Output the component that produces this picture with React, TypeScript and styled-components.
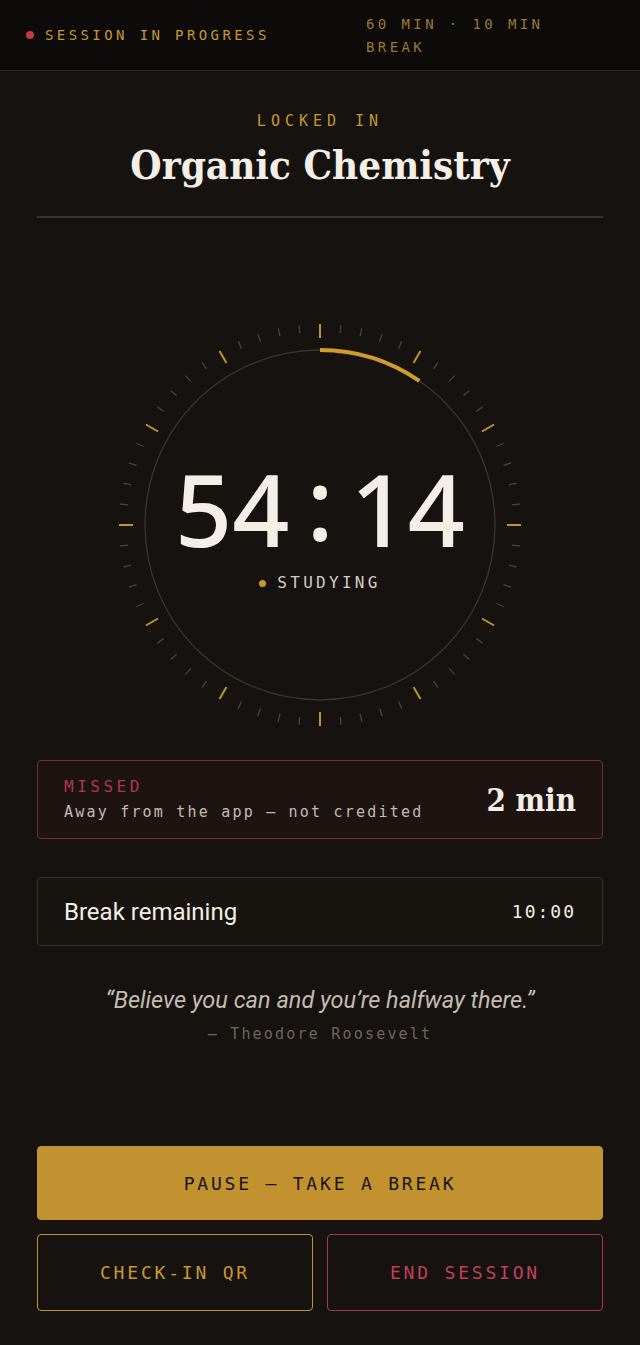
import styled, { createGlobalStyle } from 'styled-components';

const colors = {
  PAGE: '#15120f',
  BAR: '#0d0b09',
  GOLD: '#c8982f',
  GOLD_DIM: '#9a7834',
  RED: '#b3344c',
  RED_BORDER: '#7c2a38',
  INK: '#f3efe6',
  TEXT: '#c4bcb0',
  MUTED: '#6d665c',
  LINE: '#37322c',
};

const MONO = '"DejaVu Sans Mono", "Liberation Mono", monospace';
const SERIF = '"DejaVu Serif Condensed", "DejaVu Serif", serif';

const GlobalStyle = createGlobalStyle`
  * { box-sizing: border-box; }
  body {
    margin: 0;
    background: ${colors.PAGE};
    color: ${colors.INK};
    font-family: Roboto, "Noto Sans", sans-serif;
  }
`;

const Page = styled.div`
  min-height: 100vh;
  display: flex;
  flex-direction: column;
`;

const TopBar = styled.header`
  height: 71px;
  display: flex;
  align-items: center;
  justify-content: space-between;
  padding: 2px 44px 0 26px;
  background: ${colors.BAR};
  border-bottom: 1px solid #2a2622;
`;

const Status = styled.div`
  display: flex;
  align-items: center;
  gap: 11px;
  margin-top: -2px;
  font-family: ${MONO};
  font-size: 14px;
  letter-spacing: 3.4px;
  color: ${colors.GOLD};
`;

const Dot = styled.span<{ $color: string; $size?: number }>`
  width: ${p => p.$size ?? 8}px;
  height: ${p => p.$size ?? 8}px;
  border-radius: 50%;
  background: ${p => p.$color};
  flex-shrink: 0;
`;

const Plan = styled.div`
  width: 230px;
  font-family: ${MONO};
  font-size: 14px;
  line-height: 23px;
  letter-spacing: 3.4px;
  color: ${colors.GOLD_DIM};
`;

const Main = styled.main`
  flex: 1;
  display: flex;
  flex-direction: column;
  padding: 0 37px 34px;
`;

const Heading = styled.section`
  display: flex;
  flex-direction: column;
  align-items: center;
  padding-top: 40px;
  padding-bottom: 26px;
  border-bottom: 2px solid ${colors.LINE};
`;

const Eyebrow = styled.div`
  font-family: ${MONO};
  font-size: 15px;
  letter-spacing: 5px;
  color: ${colors.GOLD};
  line-height: 20px;
`;

const Title = styled.h1`
  margin: 9px 0 0;
  font-family: ${SERIF};
  font-weight: 700;
  font-size: 40px;
  line-height: 50px;
  color: ${colors.INK};
`;

const Dial = styled.div`
  position: relative;
  width: 420px;
  height: 420px;
  margin: 97px auto 0;
`;

const DialCenter = styled.div`
  position: absolute;
  inset: 0;
  display: flex;
  flex-direction: column;
  align-items: center;
  justify-content: center;
`;

const Clock = styled.div`
  display: flex;
  align-items: center;
  font-family: "Noto Sans", "Open Sans", sans-serif;
  font-weight: 500;
  font-size: 100px;
  line-height: 100px;
  color: ${colors.INK};
`;

const Colon = styled.span`
  margin: 0 17px;
  position: relative;
  top: -6px;
`;

const Phase = styled.div`
  margin-top: 16px;
  display: flex;
  align-items: center;
  gap: 11px;
  font-family: ${MONO};
  font-size: 16px;
  line-height: 18px;
  letter-spacing: 3.3px;
  color: #d6cec2;
`;

const Card = styled.div<{ $tone: 'alert' | 'plain' }>`
  display: flex;
  align-items: center;
  justify-content: space-between;
  padding: 0 26px;
  border-radius: 4px;
  border: 1.5px solid ${p => (p.$tone === 'alert' ? colors.RED_BORDER : colors.LINE)};
  background: ${p => (p.$tone === 'alert' ? '#1d1412' : '#17140f')};
  height: ${p => (p.$tone === 'alert' ? 79 : 69)}px;
`;

const MissedCard = styled(Card)`
  margin-top: 25px;
`;

const BreakCard = styled(Card)`
  margin-top: 38px;
`;

const CardText = styled.div`
  display: flex;
  flex-direction: column;
  gap: 5px;
`;

const CardLabel = styled.div`
  font-family: ${MONO};
  font-size: 16px;
  line-height: 20px;
  letter-spacing: 3.5px;
  color: ${colors.RED};
`;

const CardNote = styled.div`
  font-family: ${MONO};
  font-size: 15px;
  line-height: 20px;
  letter-spacing: 2.2px;
  color: ${colors.TEXT};
`;

const BigValue = styled.div`
  font-family: ${SERIF};
  font-weight: 700;
  font-size: 31px;
  color: ${colors.INK};
`;

const BreakLabel = styled.div`
  font-size: 24px;
  color: ${colors.INK};
`;

const BreakTime = styled.div`
  font-family: ${MONO};
  font-size: 18px;
  letter-spacing: 2px;
  color: ${colors.INK};
`;

const Quote = styled.figure`
  margin: 40px 0 0;
  display: flex;
  flex-direction: column;
  align-items: center;
  gap: 11px;
`;

const QuoteText = styled.blockquote`
  margin: 0;
  font-style: italic;
  font-size: 23.5px;
  line-height: 28px;
  color: ${colors.TEXT};
`;

const QuoteAuthor = styled.figcaption`
  font-family: ${MONO};
  font-size: 15px;
  letter-spacing: 2.2px;
  color: ${colors.MUTED};
`;

const Actions = styled.div`
  margin-top: auto;
  display: flex;
  flex-direction: column;
  gap: 14px;
`;

const ButtonRow = styled.div`
  display: grid;
  grid-template-columns: 1fr 1fr;
  gap: 14px;
`;

const Button = styled.button<{ $variant: 'solid' | 'gold' | 'red' }>`
  height: ${p => (p.$variant === 'solid' ? 74 : 77)}px;
  border-radius: 4px;
  font-family: ${MONO};
  font-size: 18px;
  letter-spacing: 2.8px;
  cursor: pointer;
  background: ${p => (p.$variant === 'solid' ? '#c1922f' : 'transparent')};
  color: ${p => (p.$variant === 'solid' ? '#1a1510' : p.$variant === 'gold' ? colors.GOLD : '#c0405a')};
  border: 1.5px solid ${p => (p.$variant === 'solid' ? '#c1922f' : p.$variant === 'gold' ? '#c1922f' : '#a8344e')};
`;

const C = 210;
const RING = 175;
const elapsedDeg = (346 / 3600) * 360;

const polar = (r: number, deg: number) => {
  const a = (deg * Math.PI) / 180;
  return [C + r * Math.sin(a), C - r * Math.cos(a)];
};

const DialFace = () => {
  const ticks = Array.from({ length: 60 }, (_, i) => {
    const major = i % 5 === 0;
    const [x1, y1] = polar(major ? 187 : 193, i * 6);
    const [x2, y2] = polar(201, i * 6);
    return (
      <line
        key={i}
        x1={x1}
        y1={y1}
        x2={x2}
        y2={y2}
        stroke={major ? '#c1922f' : '#4a443c'}
        strokeWidth={major ? 2 : 1.3}
      />
    );
  });
  const [ex, ey] = polar(RING, elapsedDeg);
  return (
    <svg width={420} height={420} viewBox="0 0 420 420">
      {ticks}
      <circle cx={C} cy={C} r={RING} fill="none" stroke="#3a352f" strokeWidth={1.3} />
      <path
        d={`M ${C} ${C - RING} A ${RING} ${RING} 0 0 1 ${ex} ${ey}`}
        fill="none"
        stroke="#d09c2e"
        strokeWidth={4}
      />
    </svg>
  );
};

const App = () => {
  return (
    <Page>
      <GlobalStyle />
      <TopBar>
        <Status>
          <Dot $color="#c0394f" />
          SESSION IN PROGRESS
        </Status>
        <Plan>60 MIN · 10 MIN BREAK</Plan>
      </TopBar>
      <Main>
        <Heading>
          <Eyebrow>LOCKED IN</Eyebrow>
          <Title>Organic Chemistry</Title>
        </Heading>

        <Dial>
          <DialFace />
          <DialCenter>
            <Clock>
              54<Colon>:</Colon>14
            </Clock>
            <Phase>
              <Dot $color={colors.GOLD} $size={7} />
              STUDYING
            </Phase>
          </DialCenter>
        </Dial>

        <MissedCard $tone="alert">
          <CardText>
            <CardLabel>MISSED</CardLabel>
            <CardNote>Away from the app — not credited</CardNote>
          </CardText>
          <BigValue>2 min</BigValue>
        </MissedCard>

        <BreakCard $tone="plain">
          <BreakLabel>Break remaining</BreakLabel>
          <BreakTime>10:00</BreakTime>
        </BreakCard>

        <Quote>
          <QuoteText>“Believe you can and you’re halfway there.”</QuoteText>
          <QuoteAuthor>— Theodore Roosevelt</QuoteAuthor>
        </Quote>

        <Actions>
          <Button $variant="solid">PAUSE — TAKE A BREAK</Button>
          <ButtonRow>
            <Button $variant="gold">CHECK-IN QR</Button>
            <Button $variant="red">END SESSION</Button>
          </ButtonRow>
        </Actions>
      </Main>
    </Page>
  );
};

export default App;
